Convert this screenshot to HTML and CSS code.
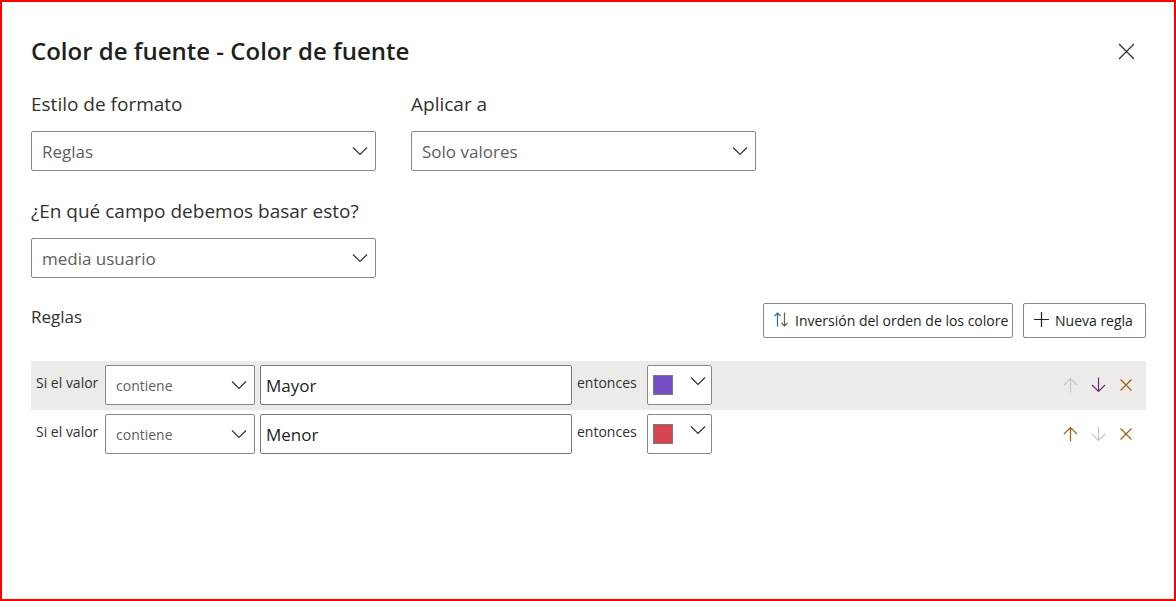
FILE: index.html
```html
<!DOCTYPE html>
<html lang="es">
<head>
<meta charset="utf-8">
<meta name="viewport" content="width=device-width, initial-scale=1">
<title>Color de fuente</title>
<link rel="stylesheet" href="styles.css">
</head>
<body>
<svg class="sprite" aria-hidden="true">
  <symbol id="chevron" viewBox="0 0 16 16"><path d="M1 4.500l7 7 7-7"/></symbol>
  <symbol id="up" viewBox="0 0 16 16"><path d="M8.500 15.500V1.500M2 8l6.500-6.500L15 8"/></symbol>
  <symbol id="down" viewBox="0 0 16 16"><path d="M8.500 .5v14M2 8l6.500 6.500L15 8"/></symbol>
  <symbol id="cross" viewBox="0 0 16 16"><path d="M2.500 2.500l11 11M13.500 2.500l-11 11"/></symbol>
</svg>
<main class="dialog">
  <header class="header">
    <h1 class="title">Color de fuente - Color de fuente</h1>
    <button class="close" type="button" aria-label="Cerrar"><svg class="close-icon" viewBox="0 0 16 16"><path d="M1 1l14 14M15 1L1 15"/></svg></button>
  </header>

  <div class="fields">
    <div class="field">
      <label class="label" for="style">Estilo de formato</label>
      <div class="picker"><select class="select" id="style"><option>Reglas</option></select><svg class="icon chevron"><use href="#chevron"/></svg></div>
    </div>
    <div class="field">
      <label class="label" for="apply">Aplicar a</label>
      <div class="picker"><select class="select" id="apply"><option>Solo valores</option></select><svg class="icon chevron"><use href="#chevron"/></svg></div>
    </div>
    <div class="field">
      <label class="label" for="base">¿En qué campo debemos basar esto?</label>
      <div class="picker"><select class="select" id="base"><option>media usuario</option></select><svg class="icon chevron"><use href="#chevron"/></svg></div>
    </div>
  </div>

  <section class="rules">
    <div class="toolbar">
      <h2 class="subtitle">Reglas</h2>
      <button class="action reverse" type="button"><svg class="icon" viewBox="0 0 16 16"><path class="rise" d="M4.500 14.500V1M1.500 4l3-3 3 3"/><path class="fall" d="M11.500 .5V14M8.500 11l3 3 3-3"/></svg><span>Inversión del orden de los colore</span></button>
      <button class="action add" type="button"><svg class="icon" viewBox="0 0 16 16"><path d="M8.500 0v15M1 7.500h15"/></svg><span>Nueva regla</span></button>
    </div>

    <div class="rule shaded">
      <label class="word lead" for="op1">Si el valor</label>
      <div class="picker operator"><select class="select small" id="op1"><option>contiene</option></select><svg class="icon chevron"><use href="#chevron"/></svg></div>
      <input class="value" type="text" value="Mayor" aria-label="Valor de la regla 1">
      <span class="word">entonces</span>
      <button class="color" type="button" aria-label="Color morado"><span class="swatch purple"></span><svg class="icon"><use href="#chevron"/></svg></button>
      <div class="tools">
        <button class="tool" type="button" aria-label="Subir" disabled><svg class="icon"><use href="#up"/></svg></button>
        <button class="tool plum" type="button" aria-label="Bajar"><svg class="icon"><use href="#down"/></svg></button>
        <button class="tool amber" type="button" aria-label="Eliminar"><svg class="icon"><use href="#cross"/></svg></button>
      </div>
    </div>
    <div class="rule">
      <label class="word lead" for="op2">Si el valor</label>
      <div class="picker operator"><select class="select small" id="op2"><option>contiene</option></select><svg class="icon chevron"><use href="#chevron"/></svg></div>
      <input class="value" type="text" value="Menor" aria-label="Valor de la regla 2">
      <span class="word">entonces</span>
      <button class="color" type="button" aria-label="Color rojo"><span class="swatch red"></span><svg class="icon"><use href="#chevron"/></svg></button>
      <div class="tools">
        <button class="tool amber" type="button" aria-label="Subir"><svg class="icon"><use href="#up"/></svg></button>
        <button class="tool" type="button" aria-label="Bajar" disabled><svg class="icon"><use href="#down"/></svg></button>
        <button class="tool amber" type="button" aria-label="Eliminar"><svg class="icon"><use href="#cross"/></svg></button>
      </div>
    </div>
  </section>
</main>
</body>
</html>
```
FILE: styles.css
```css
* {
  box-sizing: border-box;
}

body {
  margin: 0;
  font-family: "Open Sans", "Noto Sans", sans-serif;
  color: #323130;
  background: #fff;
}

button,
input,
select {
  font-family: inherit;
  color: inherit;
  margin: 0;
}

.sprite {
  position: absolute;
  width: 0;
  height: 0;
}

.dialog {
  min-height: 100vh;
  padding: 33px 28px 28px 29px;
  border: 2px solid #f00;
}

.header {
  display: flex;
  align-items: center;
  justify-content: space-between;
  padding-right: 11px;
  margin-bottom: 24px;
}

.title {
  margin: 0;
  font-size: 24px;
  line-height: 32px;
  font-weight: 600;
  color: #201f1e;
}

.close,
.tool {
  display: flex;
  padding: 0;
  border: 0;
  background: none;
}

.icon,
.close-icon {
  flex: none;
  width: 16px;
  height: 16px;
  fill: none;
  stroke: currentColor;
  stroke-width: 1.2;
}

.close-icon {
  width: 17px;
  height: 17px;
}

.fields {
  display: grid;
  grid-template-columns: repeat(2, 345px);
  gap: 27px 35px;
  margin-bottom: 25px;
}

.label {
  display: block;
  margin-bottom: 14px;
  font-size: 19px;
  line-height: 26px;
}

.picker {
  position: relative;
}

.select {
  display: block;
  width: 100%;
  height: 40px;
  padding: 0 32px 0 10px;
  border: 1px solid #8a8886;
  border-radius: 2px;
  appearance: none;
  background: #fff;
  color: #605e5c;
  font-size: 17px;
}

.select.small {
  font-size: 14px;
}

.chevron {
  position: absolute;
  top: 12px;
  right: 8px;
  pointer-events: none;
}

.toolbar {
  display: flex;
  align-items: center;
  gap: 10px;
  margin-bottom: 23px;
}

.subtitle {
  flex: 1;
  margin: 0;
  padding-bottom: 8px;
  font-size: 17px;
  line-height: 24px;
  font-weight: 400;
}

.action {
  display: flex;
  align-items: center;
  gap: 6px;
  height: 35px;
  padding: 0 9px;
  border: 1px solid #8a8886;
  border-radius: 2px;
  background: #fff;
  color: #201f1e;
  font-size: 14px;
  white-space: nowrap;
  overflow: hidden;
}

.reverse {
  width: 250px;
}

.add {
  width: 123px;
}

.action .icon {
  margin-bottom: 2px;
}

.rise {
  stroke: #2f6f9f;
}

.fall {
  stroke: #6e5a3c;
}

.rule {
  display: flex;
  align-items: center;
  gap: 5px;
  padding: 4px 12px 5px 5px;
}

.shaded {
  background: #edebe9;
}

.word {
  padding-bottom: 5px;
  font-size: 14px;
  line-height: 20px;
}

.lead {
  width: 64px;
}

.operator {
  width: 150px;
}

.value {
  width: 312px;
  height: 40px;
  padding: 1px 5px 0;
  border: 1px solid #7a7876;
  border-radius: 2px;
  background: #fff;
  color: #201f1e;
  font-size: 17px;
}

.color {
  display: flex;
  align-items: center;
  justify-content: space-between;
  width: 65px;
  height: 40px;
  margin-left: 5px;
  padding: 0 5px;
  border: 1px solid #8a8886;
  border-radius: 2px;
  background: #fff;
}

.color .icon {
  margin-bottom: 8px;
}

.swatch {
  width: 20px;
  height: 20px;
  border: 1px solid #7a7876;
}

.purple {
  background: #744ec2;
}

.red {
  background: #d64550;
}

.tools {
  display: flex;
  gap: 12px;
  margin-left: auto;
}

.tool:disabled {
  color: #c8c6c4;
}

.plum {
  color: #742774;
}

.amber {
  color: #a2600f;
}
```
